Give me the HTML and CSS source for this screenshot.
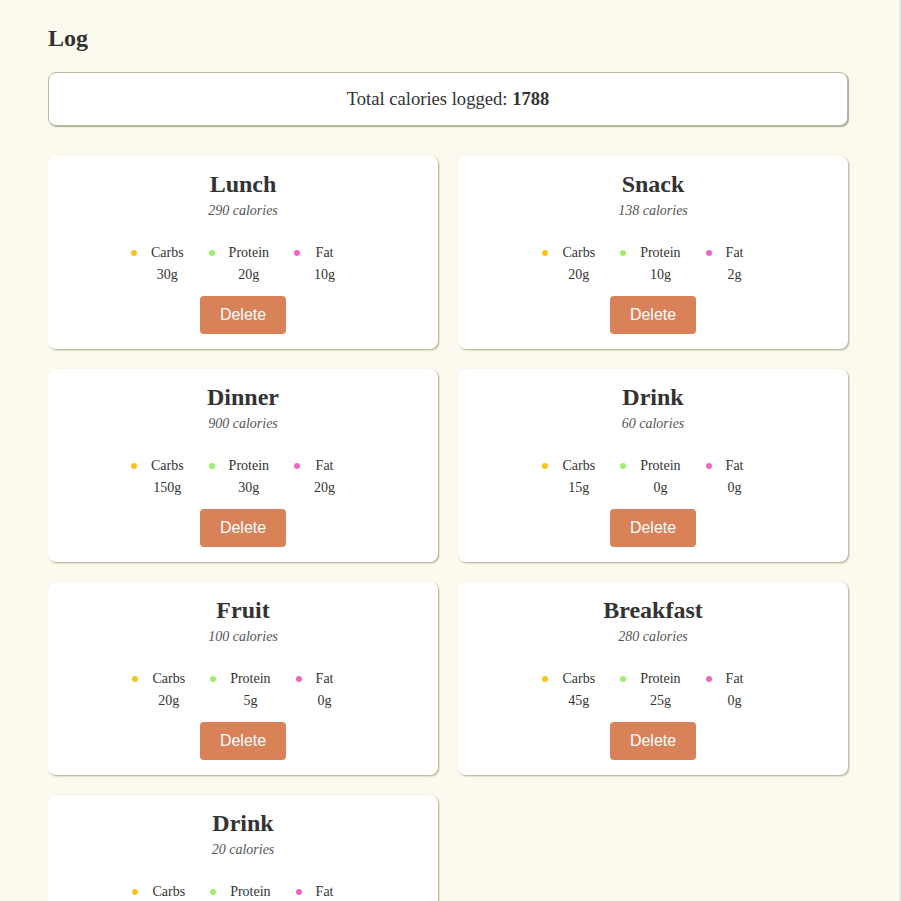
FILE: index.html
```html
<!DOCTYPE html>
<html lang="en">
<head>
<meta charset="utf-8">
<title>Log</title>
<link rel="stylesheet" href="styles.css">
</head>
<body>
<main class="page">
  <h1 class="page-title">Log</h1>
  <div class="summary">Total calories logged: <strong>1788</strong></div>
  <section class="grid">
    <article class="card">
      <h2 class="card-title">Lunch</h2>
      <p class="cal">290 calories</p>
      <ul class="macros">
        <li class="macro carbs"><span class="m-label">Carbs</span><span class="m-val">30g</span></li>
        <li class="macro protein"><span class="m-label">Protein</span><span class="m-val">20g</span></li>
        <li class="macro fat"><span class="m-label">Fat</span><span class="m-val">10g</span></li>
      </ul>
      <button class="del">Delete</button>
    </article>
    <article class="card">
      <h2 class="card-title">Snack</h2>
      <p class="cal">138 calories</p>
      <ul class="macros">
        <li class="macro carbs"><span class="m-label">Carbs</span><span class="m-val">20g</span></li>
        <li class="macro protein"><span class="m-label">Protein</span><span class="m-val">10g</span></li>
        <li class="macro fat"><span class="m-label">Fat</span><span class="m-val">2g</span></li>
      </ul>
      <button class="del">Delete</button>
    </article>
    <article class="card">
      <h2 class="card-title">Dinner</h2>
      <p class="cal">900 calories</p>
      <ul class="macros">
        <li class="macro carbs"><span class="m-label">Carbs</span><span class="m-val">150g</span></li>
        <li class="macro protein"><span class="m-label">Protein</span><span class="m-val">30g</span></li>
        <li class="macro fat"><span class="m-label">Fat</span><span class="m-val">20g</span></li>
      </ul>
      <button class="del">Delete</button>
    </article>
    <article class="card">
      <h2 class="card-title">Drink</h2>
      <p class="cal">60 calories</p>
      <ul class="macros">
        <li class="macro carbs"><span class="m-label">Carbs</span><span class="m-val">15g</span></li>
        <li class="macro protein"><span class="m-label">Protein</span><span class="m-val">0g</span></li>
        <li class="macro fat"><span class="m-label">Fat</span><span class="m-val">0g</span></li>
      </ul>
      <button class="del">Delete</button>
    </article>
    <article class="card">
      <h2 class="card-title">Fruit</h2>
      <p class="cal">100 calories</p>
      <ul class="macros">
        <li class="macro carbs"><span class="m-label">Carbs</span><span class="m-val">20g</span></li>
        <li class="macro protein"><span class="m-label">Protein</span><span class="m-val">5g</span></li>
        <li class="macro fat"><span class="m-label">Fat</span><span class="m-val">0g</span></li>
      </ul>
      <button class="del">Delete</button>
    </article>
    <article class="card">
      <h2 class="card-title">Breakfast</h2>
      <p class="cal">280 calories</p>
      <ul class="macros">
        <li class="macro carbs"><span class="m-label">Carbs</span><span class="m-val">45g</span></li>
        <li class="macro protein"><span class="m-label">Protein</span><span class="m-val">25g</span></li>
        <li class="macro fat"><span class="m-label">Fat</span><span class="m-val">0g</span></li>
      </ul>
      <button class="del">Delete</button>
    </article>
    <article class="card">
      <h2 class="card-title">Drink</h2>
      <p class="cal">20 calories</p>
      <ul class="macros">
        <li class="macro carbs"><span class="m-label">Carbs</span><span class="m-val">5g</span></li>
        <li class="macro protein"><span class="m-label">Protein</span><span class="m-val">0g</span></li>
        <li class="macro fat"><span class="m-label">Fat</span><span class="m-val">0g</span></li>
      </ul>
      <button class="del">Delete</button>
    </article>
  </section>
</main>
</body>
</html>
```

FILE: styles.css
```css
html {
  background: #fcfaee;
  box-shadow: inset -2px 0 0 #ecece6;
}
body {
  margin: 0;
  font-family: "Liberation Serif", "Times New Roman", serif;
  color: #333;
}
.page {
  width: 800px;
  padding: 24px 48px 40px;
}
.page-title {
  margin: 0 0 20px;
  font-size: 24px;
  line-height: 28px;
  font-weight: bold;
}
.summary {
  background: #fff;
  border: 1px solid #b7bb9f;
  border-radius: 8px;
  box-shadow: 1px 1px 1px #a7ab8e;
  padding: 15px;
  text-align: center;
  font-size: 18.6px;
  line-height: 22px;
}
.grid {
  margin-top: 30px;
  display: grid;
  grid-template-columns: 1fr 1fr;
  gap: 20px;
}
.card {
  background: #fff;
  border-radius: 8px;
  box-shadow: 1px 1px 2px #a3a88a;
  padding: 14px 16px 15px;
  display: flex;
  flex-direction: column;
  align-items: center;
  text-align: center;
}
.card-title {
  margin: 0;
  font-size: 24px;
  line-height: 28px;
  font-weight: bold;
}
.cal {
  margin: 5px 0 0;
  font-size: 14px;
  line-height: 16px;
  font-style: italic;
  color: #555;
}
.macros {
  list-style: none;
  margin: 26px 0 0;
  padding: 0;
  display: flex;
  justify-content: center;
  gap: 45px;
}
.macro {
  position: relative;
  display: flex;
  flex-direction: column;
  align-items: center;
  font-size: 14px;
  line-height: 16px;
}
.macro::before {
  content: "";
  position: absolute;
  left: -20px;
  top: 5px;
  width: 6px;
  height: 6px;
  border-radius: 50%;
}
.carbs::before { background: #f8c41c; }
.protein::before { background: #9ef06b; }
.fat::before { background: #ef67c1; }
.m-val {
  margin-top: 6px;
}
.del {
  margin-top: 13px;
  height: 38px;
  padding: 0 20px;
  border: none;
  border-radius: 4px;
  background: #d9825a;
  color: #fff;
  font-family: "Liberation Sans", Arial, sans-serif;
  font-size: 16px;
  cursor: pointer;
}
```
